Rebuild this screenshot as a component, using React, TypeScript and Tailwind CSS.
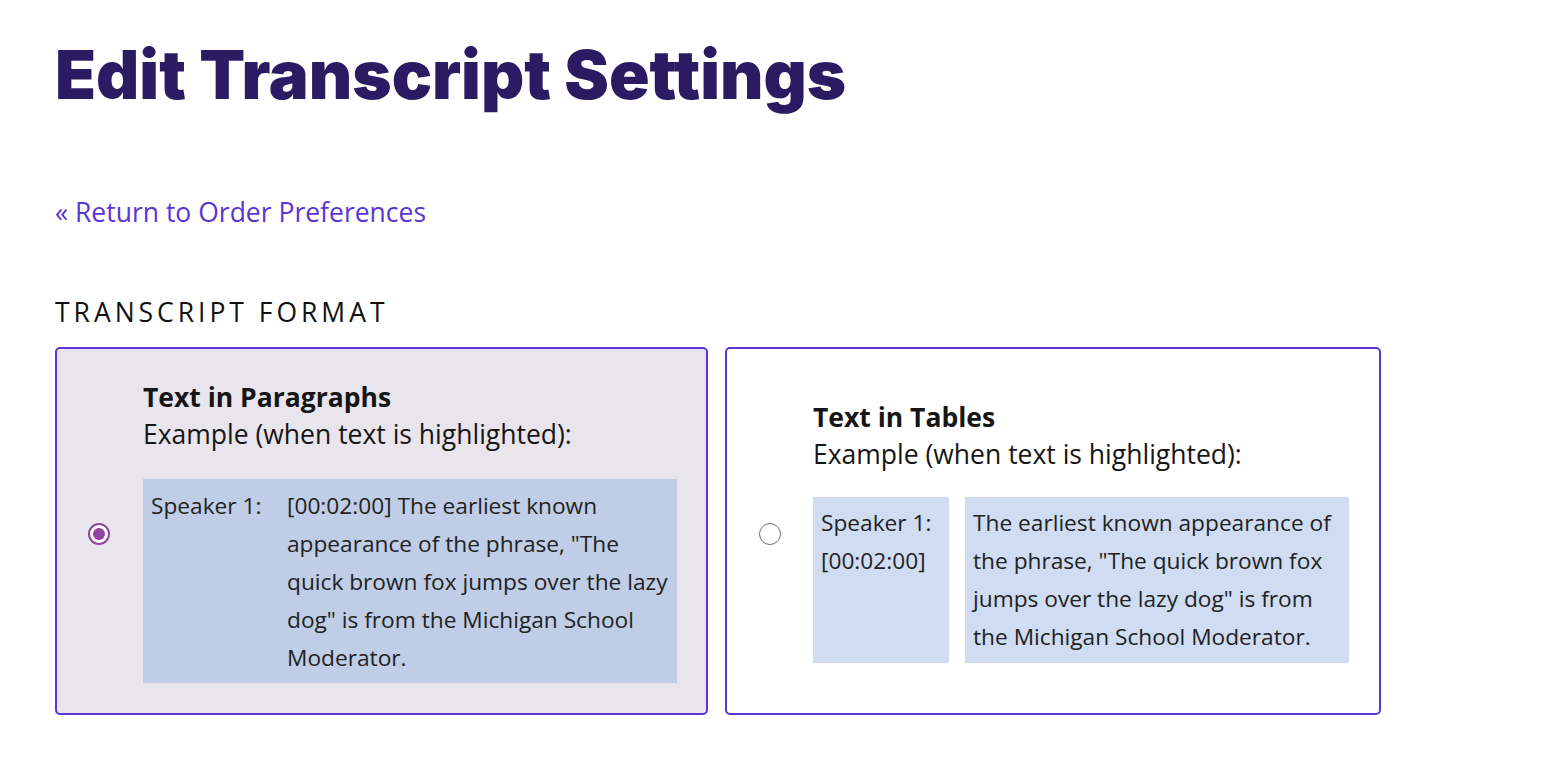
import React from 'react';

const body = "font-['Open_Sans',sans-serif]";

const exampleText =
  'The earliest known appearance of the phrase, "The quick brown fox jumps over the lazy dog" is from the Michigan School Moderator.';

const Radio = ({ checked }: { checked: boolean }) =>
  checked ? (
    <span className="mt-[6px] flex h-[22px] w-[22px] shrink-0 items-center justify-center rounded-full border-2 border-[#8e44a0] bg-white">
      <span className="h-[12px] w-[12px] rounded-full bg-[#8e44a0]" />
    </span>
  ) : (
    <span className="mt-[6px] h-[22px] w-[22px] shrink-0 rounded-full border-[1.5px] border-[#707070] bg-white" />
  );

export default function App() {
  return (
    <div className={`min-h-screen bg-white px-[55px] pt-[41px] text-[#161616] ${body}`}>
      <h1 className="font-['Inter',sans-serif] text-[67px] font-black leading-none text-[#2a1b63]">
        Edit Transcript Settings
      </h1>

      <a href="#" className="mt-[86px] block text-[26.5px] leading-[36px] text-[#5b35d5]">
        « Return to Order Preferences
      </a>

      <h2 className="mt-[64px] text-[26.5px] leading-[36px] tracking-[0.15em] text-[#111]">TRANSCRIPT FORMAT</h2>

      <div className="mt-[17px] flex gap-[17px]">
        <label className="flex h-[368px] w-[653px] items-center gap-[33px] rounded-[5px] border-2 border-[#5b35d5] bg-[#e8e5ec] pl-[31px] pr-[29px]">
          <Radio checked />
          <div className="flex-1">
            <div className="text-[26.5px] font-bold leading-[37px]">Text in Paragraphs</div>
            <div className="text-[26.5px] leading-[37px]">Example (when text is highlighted):</div>
            <div className="mt-[26px] flex bg-[#bfcde6] px-[8px] pb-[6px] pt-[8px] text-[22.7px] leading-[38px] text-[#222]">
              <div className="w-[136px] shrink-0">Speaker 1:</div>
              <div className="flex-1">{`[00:02:00] ${exampleText}`}</div>
            </div>
          </div>
        </label>

        <label className="flex h-[368px] w-[656px] items-center gap-[32px] rounded-[5px] border-2 border-[#5b35d5] bg-white pl-[32px] pr-[30px]">
          <Radio checked={false} />
          <div className="flex-1">
            <div className="text-[26.5px] font-bold leading-[37px]">Text in Tables</div>
            <div className="text-[26.5px] leading-[37px]">Example (when text is highlighted):</div>
            <div className="mt-[24px] flex gap-[16px] text-[22.7px] leading-[38px] text-[#222]">
              <div className="w-[136px] shrink-0 bg-[#cfdcf2] px-[8px] py-[7px]">
                Speaker 1:
                <br />
                [00:02:00]
              </div>
              <div className="flex-1 bg-[#cfdcf2] px-[8px] py-[7px]">{exampleText}</div>
            </div>
          </div>
        </label>
      </div>
    </div>
  );
}
